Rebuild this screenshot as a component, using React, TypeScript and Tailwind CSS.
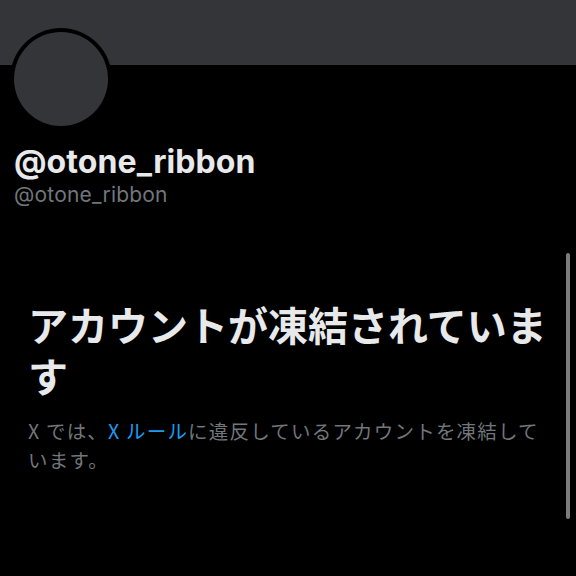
export default function App() {
  return (
    <div className="relative w-[576px] h-[576px] overflow-hidden bg-black font-['Inter','Noto_Sans_CJK_JP',sans-serif]">
      {/* Banner */}
      <div className="h-[65px] bg-[#333539]" />

      {/* Avatar overlapping banner */}
      <div className="absolute left-[10px] top-[28px] w-[102px] h-[102px] rounded-full bg-black p-[4px]">
        <div className="w-full h-full rounded-full bg-[#333539]" />
      </div>

      {/* Profile names */}
      <div className="px-[14px] pt-[78px]">
        <div className="text-[32px] leading-[38px] font-bold text-[#e7e9ea] tracking-[0.1px]">@otone_ribbon</div>
        <div className="text-[21px] leading-[28px] text-[#71767b] tracking-[0.2px]">@otone_ribbon</div>
      </div>

      {/* Suspended notice */}
      <div className="pl-[28px] pr-[20px] pt-[90px]">
        <h1 className="text-[40px] leading-[51px] font-bold text-[#e7e9ea] font-['Noto_Sans_CJK_JP',sans-serif]">
          アカウントが凍結されていま<br />す
        </h1>
        <p className="mt-[15px] text-[19.5px] leading-[29px] tracking-[1.2px] text-[#71767b] font-['Noto_Sans_CJK_JP',sans-serif]">
          X では、<span className="text-[#1d9bf0]">X ルール</span>に違反しているアカウントを凍結して<br />います。
        </p>
      </div>

      {/* Scrollbar */}
      <div className="absolute right-[6px] top-[253px] w-[4px] h-[266px] rounded-full bg-[#7c7c7c]" />
    </div>
  )
}
